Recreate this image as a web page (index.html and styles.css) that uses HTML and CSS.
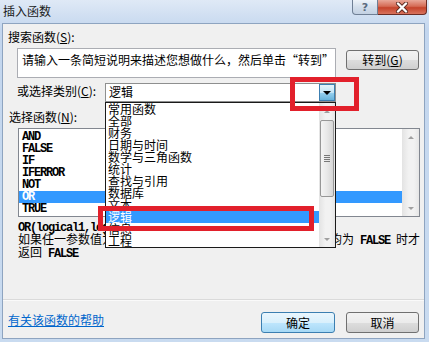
FILE: index.html
```html
<!DOCTYPE html>
<html lang="zh-CN">
<head>
    <meta charset="UTF-8">
    <title>插入函数</title>
    <link rel="stylesheet" href="styles.css">
</head>
<body>
    <div class="window">
        <div class="titlebar">
            <div class="title">插入函数</div>
            <div class="caption-buttons">
                <div class="cap-btn help">?</div>
                <div class="cap-btn close">
                    <svg width="14" height="11" viewBox="0 0 14 11">
                        <path d="M3 1.5 L11 9.5 M11 1.5 L3 9.5" stroke="#5a2a22" stroke-width="4" stroke-linecap="round"/>
                        <path d="M3 1.5 L11 9.5 M11 1.5 L3 9.5" stroke="#fff" stroke-width="2.4" stroke-linecap="round"/>
                    </svg>
                </div>
            </div>
        </div>

        <div class="panel">
            <div class="label search-label">搜索函数(<u>S</u>):</div>
            <div class="search-row">
                <div class="search-box">请输入一条简短说明来描述您想做什么，然后单击“转到”</div>
                <div class="btn go-btn">转到(<u>G</u>)</div>
            </div>

            <div class="category-row">
                <div class="label category-label">或选择类别(<u>C</u>):</div>
                <div class="combo">
                    <span class="combo-text">逻辑</span>
                    <span class="combo-arrow"></span>
                </div>
            </div>

            <div class="label fn-label">选择函数(<u>N</u>):</div>
            <div class="fn-list">
                <div class="fn-items">
                    <div class="fn-item mono">AND</div>
                    <div class="fn-item mono">FALSE</div>
                    <div class="fn-item mono">IF</div>
                    <div class="fn-item mono">IFERROR</div>
                    <div class="fn-item mono">NOT</div>
                    <div class="fn-item mono selected">OR</div>
                    <div class="fn-item mono">TRUE</div>
                </div>
                <div class="scrollbar fn-scroll">
                    <div class="sb-arrow up"></div>
                    <div class="sb-track"></div>
                    <div class="sb-arrow down"></div>
                </div>
            </div>

            <div class="desc">
                <div class="desc-line"><span class="mono">OR(logical1,logical2,...)</span></div>
                <div class="desc-line">如果任一参数值为<span class="mono"> TRUE</span>，即返回<span class="mono"> TRUE</span>；只有当所有参数值均为<span class="mono"> FALSE </span>时才</div>
                <div class="desc-line">返回<span class="mono"> FALSE</span></div>
            </div>

            <div class="separator"></div>

            <div class="bottom-row">
                <a class="help-link" href="#">有关该函数的帮助</a>
                <div class="btn ok-btn">确定</div>
                <div class="btn cancel-btn">取消</div>
            </div>
        </div>

        <!-- 展开的类别下拉列表 -->
        <div class="dropdown">
            <div class="dd-items">
                <div class="dd-item">常用函数</div>
                <div class="dd-item">全部</div>
                <div class="dd-item">财务</div>
                <div class="dd-item">日期与时间</div>
                <div class="dd-item">数学与三角函数</div>
                <div class="dd-item">统计</div>
                <div class="dd-item">查找与引用</div>
                <div class="dd-item">数据库</div>
                <div class="dd-item">文本</div>
                <div class="dd-item selected">逻辑</div>
                <div class="dd-item">信息</div>
                <div class="dd-item">工程</div>
            </div>
            <div class="scrollbar dd-scroll">
                <div class="sb-arrow up"></div>
                <div class="sb-thumb"><span class="grip"></span></div>
                <div class="sb-track"></div>
                <div class="sb-arrow down"></div>
            </div>
        </div>

        <!-- 红色标注框 -->
        <div class="mark mark-arrow"></div>
        <div class="mark mark-item"></div>
    </div>
</body>
</html>
```

FILE: styles.css
```css
body {
    margin: 0;
    font-family: "Noto Sans CJK SC", sans-serif;
    font-size: 12px;
    color: #000;
}

.window {
    position: relative;
    width: 429px;
    height: 342px;
    display: flex;
    flex-direction: column;
    background: linear-gradient(to bottom, #dfe9f6, #c3d6ee 30px, #c9dbf0);
    overflow: hidden;
}

.titlebar {
    height: 23px;
    display: flex;
    align-items: flex-start;
    flex-shrink: 0;
}

.title {
    padding: 4px 0 0 3px;
    line-height: 14px;
    color: #1b1b1b;
}

.caption-buttons {
    margin-left: auto;
    margin-right: 2px;
    display: flex;
}

.cap-btn {
    height: 15px;
    box-sizing: border-box;
    display: flex;
    align-items: center;
    justify-content: center;
}

.help {
    width: 26px;
    border: 1px solid #6f7f95;
    border-top: none;
    border-radius: 0 0 0 4px;
    background: linear-gradient(to bottom, #eef3f9, #d3deeb 50%, #c3d1e3);
    color: #5b6b80;
    font-family: "DejaVu Sans", sans-serif;
    font-size: 11px;
    font-weight: bold;
    line-height: 13px;
}

.close {
    width: 49px;
    border: 1px solid #6b2c24;
    border-top: none;
    border-left: none;
    border-radius: 0 0 4px 0;
    background: linear-gradient(to bottom, #e9a899, #d56b55 45%, #c5432b 55%, #d8735d);
}

.panel {
    flex: 1;
    margin: 0 4px 3px 2px;
    background: #f0f0f0;
    border: 1px solid #8ea4c0;
}

.label {
    line-height: 14px;
}

.search-label {
    margin: 6px 0 0 5px;
}

.search-row {
    display: flex;
    margin: 4px 0 0 14px;
}

.search-box {
    width: 319px;
    height: 30px;
    box-sizing: border-box;
    border: 1px solid #abadb3;
    background: #fff;
    padding: 3px 0 0 4px;
    line-height: 16px;
    white-space: nowrap;
}

.btn {
    height: 20px;
    box-sizing: border-box;
    border: 1px solid #707070;
    border-radius: 3px;
    background: linear-gradient(to bottom, #f2f2f2, #ebebeb 50%, #dddddd 51%, #cfcfcf);
    display: flex;
    align-items: center;
    justify-content: center;
    line-height: 14px;
}

.go-btn {
    width: 73px;
    margin: 2px 0 0 10px;
}

.category-row {
    display: flex;
    align-items: flex-start;
    margin: 5px 0 0 14px;
}

.category-label {
    width: 88px;
    line-height: 16px;
}

.combo {
    width: 231px;
    height: 19px;
    box-sizing: border-box;
    border: 1px solid #8e8f8f;
    background: #fff;
    display: flex;
}

.combo-text {
    flex: 1;
    padding-left: 3px;
    line-height: 16px;
}

.combo-arrow {
    width: 16px;
    box-sizing: border-box;
    border: 1px solid #3c7fb1;
    background: linear-gradient(to bottom, #e5f4fc, #c4e5f6 50%, #98d1ef 51%, #68b3db);
    display: flex;
    align-items: center;
    justify-content: center;
}

.combo-arrow::after {
    content: "";
    border-left: 4px solid transparent;
    border-right: 4px solid transparent;
    border-top: 4px solid #000;
}

.fn-label {
    margin: 8px 0 0 6px;
}

.fn-list {
    width: 402px;
    height: 89px;
    box-sizing: border-box;
    margin: 4px 0 0 15px;
    border: 1px solid #828790;
    background: #fff;
    display: flex;
}

.fn-items {
    flex: 1;
    padding-top: 2px;
}

.mono {
    font-family: "Liberation Mono", monospace;
    font-size: 12px;
    font-weight: bold;
    letter-spacing: -1.2px;
}

.fn-item {
    height: 12px;
    line-height: 12px;
    padding-left: 3px;
    white-space: nowrap;
}

.fn-item.selected {
    background: #3399ff;
    color: #fff;
}

.scrollbar {
    width: 17px;
    display: flex;
    flex-direction: column;
    background: linear-gradient(to right, #e3e3e3, #f2f2f2 40%, #f2f2f2 70%, #e6e6e6);
}

.sb-track {
    flex: 1;
}

.sb-arrow {
    height: 16px;
    display: flex;
    align-items: center;
    justify-content: center;
}

.sb-arrow.up::after {
    content: "";
    border-left: 3px solid transparent;
    border-right: 3px solid transparent;
    border-bottom: 3px solid #a0a0a0;
}

.sb-arrow.down::after {
    content: "";
    border-left: 3px solid transparent;
    border-right: 3px solid transparent;
    border-top: 3px solid #a0a0a0;
}

.desc {
    margin: 2px 0 0 15px;
}

.desc-line {
    height: 13px;
    line-height: 13px;
    white-space: nowrap;
}

.separator {
    margin-top: 41px;
    border-top: 1px solid #dadada;
    border-bottom: 1px solid #fafafa;
}

.bottom-row {
    display: flex;
    align-items: flex-start;
    margin-top: 11px;
    padding: 0 5px;
}

.help-link {
    margin-top: 1px;
    line-height: 14px;
    color: #0066cc;
    text-decoration: underline;
}

.ok-btn {
    width: 74px;
    height: 21px;
    margin-left: auto;
    border-color: #3c7fb1;
    background: linear-gradient(to bottom, #eaf6fd, #d9f0fc 50%, #bee6fd 51%, #a7d9f5);
}

.cancel-btn {
    width: 73px;
    height: 21px;
    margin-left: 11px;
}

/* 下拉列表 */
.dropdown {
    position: absolute;
    left: 105px;
    top: 102px;
    width: 231px;
    height: 146px;
    box-sizing: border-box;
    border: 1px solid #1a1a1a;
    background: #fff;
    display: flex;
}

.dd-items {
    flex: 1;
}

.dd-item {
    height: 12px;
    line-height: 12px;
    padding-left: 2px;
    white-space: nowrap;
}

.dd-item.selected {
    background: #3399ff;
    color: #fff;
}

.dd-scroll {
    width: 16px;
}

.sb-thumb {
    height: 77px;
    margin: 1px 1px 0;
    box-sizing: border-box;
    border: 1px solid #979797;
    border-radius: 2px;
    background: linear-gradient(to right, #f4f4f4, #e8e8e8 50%, #d6d6d6);
    display: flex;
    align-items: center;
    justify-content: center;
}

.grip {
    width: 6px;
    height: 7px;
    background: repeating-linear-gradient(to bottom, #777 0 1px, transparent 1px 2px);
}

/* 红框标注 */
.mark {
    position: absolute;
    box-sizing: border-box;
    border: 5px solid #e2202b;
}

.mark-arrow {
    left: 290px;
    top: 77px;
    width: 69px;
    height: 34px;
}

.mark-item {
    left: 98px;
    top: 206px;
    width: 216px;
    height: 25px;
}
```
